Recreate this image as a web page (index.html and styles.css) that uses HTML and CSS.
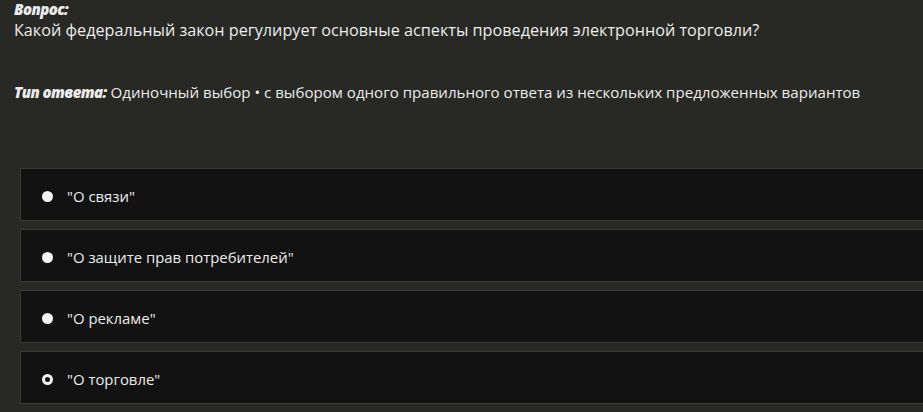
FILE: index.html
```html
<!DOCTYPE html>
<html>
<head>
  <title>Вопрос</title>
  <link rel="stylesheet" href="styles.css">
</head>
<body>
  <div class="question">
    <div class="label">Вопрос:</div>
    <div class="question-text">Какой федеральный закон регулирует основные аспекты проведения электронной торговли?</div>
    <div class="answer-type"><span class="label">Тип ответа:</span> Одиночный выбор • с выбором одного правильного ответа из нескольких предложенных вариантов</div>
  </div>

  <div class="options">
    <div class="option"><span class="radio"></span>"О связи"</div>
    <div class="option"><span class="radio"></span>"О защите прав потребителей"</div>
    <div class="option"><span class="radio"></span>"О рекламе"</div>
    <div class="option"><span class="radio checked"></span>"О торговле"</div>
  </div>
</body>
</html>
```

FILE: styles.css
```css
html, body {
  margin: 0;
  padding: 0;
  overflow: hidden;
}

body {
  font-family: "Open Sans", "Noto Sans", sans-serif;
  background-color: #282825;
  color: #ececec;
  width: 923px;
  height: 412px;
}

.question {
  padding: 1px 14px 0;
}

.label {
  font-weight: 800;
  font-style: italic;
  letter-spacing: -0.6px;
}

.question > .label {
  font-size: 15px;
  line-height: 17px;
}

.question-text {
  font-size: 16.2px;
  line-height: 24px;
}

.answer-type {
  font-size: 15.1px;
  line-height: 22px;
  margin-top: 39px;
}

.answer-type .label {
  font-size: 15px;
}

.options {
  margin-top: 65px;
  margin-left: 20px;
  width: 960px;
}

.option {
  display: flex;
  align-items: center;
  height: 53px;
  margin-bottom: 8px;
  background-color: #121212;
  border: 1px solid #3a3a36;
  font-size: 14.9px;
  padding-left: 21px;
  padding-top: 3px;
  box-sizing: border-box;
}

.radio {
  width: 11px;
  height: 11px;
  border-radius: 50%;
  background-color: #f4f4f4;
  margin-right: 14px;
  box-sizing: border-box;
}

.radio.checked {
  border: 3px solid #f4f4f4;
  background-color: #121212;
}
```
